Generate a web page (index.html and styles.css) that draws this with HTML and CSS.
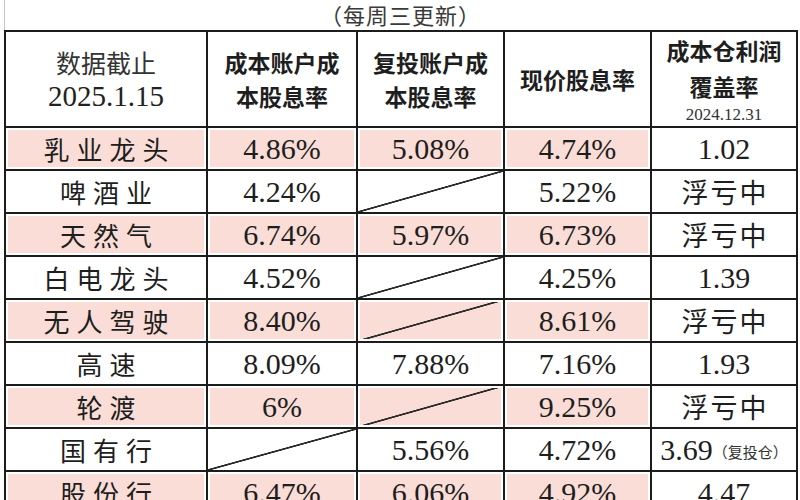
FILE: index.html
```html
<!DOCTYPE html>
<html lang="zh-CN">
<head>
<meta charset="utf-8">
<title>股息率表</title>
<link rel="stylesheet" href="styles.css">
</head>
<body>
<div class="page">
  <div class="title">（每周三更新）</div>
  <table class="grid">
    <colgroup>
      <col class="c1"><col class="c2"><col class="c3"><col class="c4"><col class="c5">
    </colgroup>
    <thead>
      <tr class="head">
        <th class="h-date"><div class="h-cn">数据截止</div><div class="h-num">2025.1.15</div></th>
        <th class="h-bold"><div>成本账户成</div><div>本股息率</div></th>
        <th class="h-bold"><div>复投账户成</div><div>本股息率</div></th>
        <th class="h-bold"><div>现价股息率</div></th>
        <th class="h-bold h-last"><div>成本仓利润</div><div>覆盖率</div><div class="h-small">2024.12.31</div></th>
      </tr>
    </thead>
    <tbody>
      <tr>
        <td class="lbl pk">乳业龙头</td><td class="num pk">4.86%</td><td class="num pk">5.08%</td><td class="num pk">4.74%</td><td class="num">1.02</td>
      </tr>
      <tr>
        <td class="lbl">啤酒业</td><td class="num">4.24%</td><td class="diag"></td><td class="num">5.22%</td><td class="loss">浮亏中</td>
      </tr>
      <tr>
        <td class="lbl pk">天然气</td><td class="num pk">6.74%</td><td class="num pk">5.97%</td><td class="num pk">6.73%</td><td class="loss">浮亏中</td>
      </tr>
      <tr>
        <td class="lbl">白电龙头</td><td class="num">4.52%</td><td class="diag"></td><td class="num">4.25%</td><td class="num">1.39</td>
      </tr>
      <tr>
        <td class="lbl pk">无人驾驶</td><td class="num pk">8.40%</td><td class="diag pk"></td><td class="num pk">8.61%</td><td class="loss">浮亏中</td>
      </tr>
      <tr>
        <td class="lbl">高速</td><td class="num">8.09%</td><td class="num">7.88%</td><td class="num">7.16%</td><td class="num">1.93</td>
      </tr>
      <tr>
        <td class="lbl pk">轮渡</td><td class="num pk">6%</td><td class="diag pk"></td><td class="num pk">9.25%</td><td class="loss">浮亏中</td>
      </tr>
      <tr>
        <td class="lbl">国有行</td><td class="diag"></td><td class="num">5.56%</td><td class="num">4.72%</td><td class="num note-cell">3.69<span class="note">（复投仓）</span></td>
      </tr>
      <tr>
        <td class="lbl pk">股份行</td><td class="num pk">6.47%</td><td class="num pk">6.06%</td><td class="num pk">4.92%</td><td class="num">4.47</td>
      </tr>
    </tbody>
  </table>
</div>
</body>
</html>
```

FILE: styles.css
```css
html, body {
  margin: 0;
  padding: 0;
  background: #ffffff;
}

.page {
  width: 800px;
  height: 500px;
  overflow: hidden;
  padding-left: 4px;
  box-sizing: border-box;
}

.title {
  height: 30px;
  width: 792px;
  box-sizing: border-box;
  border-left: 1px solid #c8c8c8;
  text-align: center;
  font-family: "Noto Sans CJK SC", sans-serif;
  font-size: 22px;
  letter-spacing: 1px;
  color: #3a3a3a;
  line-height: 28px;
}

.grid {
  width: 792px;
  table-layout: fixed;
  border-collapse: collapse;
}

.c1 { width: 202px; }
.c2 { width: 150px; }
.c3 { width: 147px; }
.c4 { width: 147px; }
.c5 { width: 146px; }

.grid th,
.grid td {
  border: 2px solid #1c1c1c;
  padding: 0;
  text-align: center;
  vertical-align: middle;
  color: #1e1e1e;
  white-space: nowrap;
}

.head {
  height: 95px;
}

.h-cn {
  font-family: "Noto Sans CJK SC", sans-serif;
  font-weight: 400;
  font-size: 25px;
  line-height: 34px;
  color: #333;
}

.h-num {
  font-family: "Liberation Serif", serif;
  font-weight: 400;
  font-size: 29px;
  line-height: 34px;
  color: #222;
}

.h-bold {
  font-family: "Noto Sans CJK SC", sans-serif;
  font-weight: 700;
  font-size: 23px;
  line-height: 34px;
  color: #151515;
}

.h-last {
  line-height: 36px;
}

.h-small {
  font-family: "Liberation Serif", serif;
  font-weight: 400;
  font-size: 17px;
  line-height: 22px;
  color: #333;
}

.grid tbody tr {
  height: 43px;
}

.lbl {
  font-family: "Noto Sans CJK SC", sans-serif;
  font-size: 26px;
  letter-spacing: 7px;
  text-indent: 7px;
  color: #2a2a2a;
  line-height: 1;
}

.num {
  font-family: "Liberation Serif", serif;
  font-size: 30px;
  line-height: 1;
  color: #1e1e1e;
}

.loss {
  font-family: "Noto Sans CJK SC", sans-serif;
  font-size: 27px;
  letter-spacing: 2px;
  text-indent: 2px;
  color: #4a4a4a;
  line-height: 1;
}

.pk {
  background-color: #f9ddd6;
  box-shadow: inset 0 0 0 2px #ffffff;
}

.diag {
  background-image: linear-gradient(to bottom right,
    transparent calc(50% - 1.2px),
    #2b2b2b calc(50% - 0.6px),
    #2b2b2b calc(50% + 0.6px),
    transparent calc(50% + 1.2px));
}

.note-cell {
  text-align: left;
  padding-left: 4px;
}

.note {
  font-family: "Noto Sans CJK SC", sans-serif;
  font-size: 15px;
  color: #333;
  vertical-align: 2px;
}
```
